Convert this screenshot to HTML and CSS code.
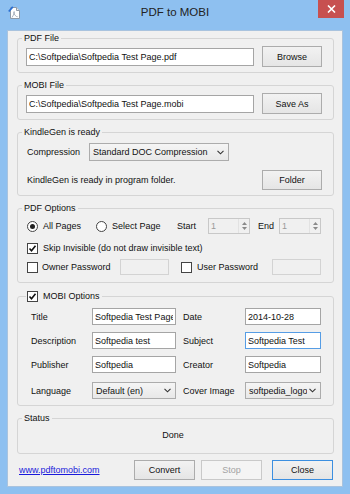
FILE: index.html
```html
<!DOCTYPE html>
<html lang="en">

<head>
    <meta charset="UTF-8">
    <meta name="viewport" content="width=device-width, initial-scale=1.0">
    <title>PDF to MOBI</title>
    <link rel="stylesheet" href="styles.css">
</head>

<body>
    <div class="window">
        <!-- Title bar -->
        <div class="titlebar">
            <svg class="app-icon" width="13" height="14" viewBox="0 0 13 14">
                <path d="M2.5 1.5h6l3 3v8h-9z" fill="#fff" stroke="#8e9aa8"/>
                <path d="M8.5 1.5v3h3" fill="#e4e8ec" stroke="#8e9aa8"/>
                <path d="M0.8 5.5L4.8 0.8" stroke="#2b6fd3" stroke-width="1.8"/>
                <path d="M4 11.5c1.6-2.4 2.8-5.2 2.2-5.8s-0.9 1.8 1.1 3.8 2.4 1 2.4 1" fill="none" stroke="#9aa6b4" stroke-width="0.9"/>
            </svg>
            <div class="title">PDF to MOBI</div>
            <div class="close-btn">
                <svg width="9" height="8" viewBox="0 0 9 8"><path d="M1 0.5l7 7M8 0.5l-7 7" stroke="#fff" stroke-width="1.6"/></svg>
            </div>
        </div>

        <div class="client">
            <!-- PDF File -->
            <fieldset class="group">
                <legend>PDF File</legend>
                <div class="file-row">
                    <input class="textbox path" type="text" value="C:\Softpedia\Softpedia Test Page.pdf">
                    <button class="btn">Browse</button>
                </div>
            </fieldset>

            <!-- MOBI File -->
            <fieldset class="group">
                <legend>MOBI File</legend>
                <div class="file-row">
                    <input class="textbox path" type="text" value="C:\Softpedia\Softpedia Test Page.mobi">
                    <button class="btn">Save As</button>
                </div>
            </fieldset>

            <!-- KindleGen -->
            <fieldset class="group">
                <legend>KindleGen is ready</legend>
                <div class="kg-row">
                    <span class="kg-label">Compression</span>
                    <div class="combo compression">
                        <span>Standard DOC Compression</span>
                        <svg class="chevron" width="7" height="5" viewBox="0 0 7 5"><path d="M0.5 0.8l3 3 3-3" fill="none" stroke="#333" stroke-width="1.1"/></svg>
                    </div>
                </div>
                <div class="kg-status">
                    <span>KindleGen is ready in program folder.</span>
                    <button class="btn">Folder</button>
                </div>
            </fieldset>

            <!-- PDF Options -->
            <fieldset class="group">
                <legend>PDF Options</legend>
                <div class="opt-row pages">
                    <span class="choice all"><span class="radio on"></span>All Pages</span>
                    <span class="choice pick"><span class="radio"></span>Select Page</span>
                    <span class="spin-label start">Start</span>
                    <div class="spin">
                        <span class="spin-value">1</span>
                        <span class="spin-arrows">
                            <svg width="5" height="3" viewBox="0 0 5 3"><path d="M0 3h5L2.5 0z" fill="#8a8a8a"/></svg>
                            <svg width="5" height="3" viewBox="0 0 5 3"><path d="M0 0h5L2.5 3z" fill="#8a8a8a"/></svg>
                        </span>
                    </div>
                    <span class="spin-label end">End</span>
                    <div class="spin">
                        <span class="spin-value">1</span>
                        <span class="spin-arrows">
                            <svg width="5" height="3" viewBox="0 0 5 3"><path d="M0 3h5L2.5 0z" fill="#8a8a8a"/></svg>
                            <svg width="5" height="3" viewBox="0 0 5 3"><path d="M0 0h5L2.5 3z" fill="#8a8a8a"/></svg>
                        </span>
                    </div>
                </div>
                <div class="opt-row skip">
                    <span class="choice">
                        <span class="check"><svg width="9" height="9" viewBox="0 0 9 9"><path d="M1.5 4.5l2 2.2 4-5" fill="none" stroke="#111" stroke-width="1.6"/></svg></span>
                        Skip Invisible (do not draw invisible text)
                    </span>
                </div>
                <div class="opt-row passwords">
                    <span class="choice owner"><span class="check"></span>Owner Password</span>
                    <input class="textbox pass" type="text" disabled>
                    <span class="choice user"><span class="check"></span>User Password</span>
                    <input class="textbox pass" type="text" disabled>
                </div>
            </fieldset>

            <!-- MOBI Options -->
            <fieldset class="group mobi">
                <legend>
                    <span class="choice">
                        <span class="check"><svg width="9" height="9" viewBox="0 0 9 9"><path d="M1.5 4.5l2 2.2 4-5" fill="none" stroke="#111" stroke-width="1.6"/></svg></span>
                        MOBI Options
                    </span>
                </legend>
                <div class="meta-grid">
                    <span class="meta-label">Title</span>
                    <input class="textbox" type="text" value="Softpedia Test Page">
                    <span class="meta-label right">Date</span>
                    <input class="textbox" type="text" value="2014-10-28">

                    <span class="meta-label">Description</span>
                    <input class="textbox" type="text" value="Softpedia test">
                    <span class="meta-label right">Subject</span>
                    <input class="textbox focused" type="text" value="Softpedia Test">

                    <span class="meta-label">Publisher</span>
                    <input class="textbox" type="text" value="Softpedia">
                    <span class="meta-label right">Creator</span>
                    <input class="textbox" type="text" value="Softpedia">

                    <span class="meta-label">Language</span>
                    <div class="combo">
                        <span>Default (en)</span>
                        <svg class="chevron" width="7" height="5" viewBox="0 0 7 5"><path d="M0.5 0.8l3 3 3-3" fill="none" stroke="#333" stroke-width="1.1"/></svg>
                    </div>
                    <span class="meta-label right">Cover Image</span>
                    <div class="combo">
                        <span>softpedia_logo</span>
                        <svg class="chevron" width="7" height="5" viewBox="0 0 7 5"><path d="M0.5 0.8l3 3 3-3" fill="none" stroke="#333" stroke-width="1.1"/></svg>
                    </div>
                </div>
            </fieldset>

            <!-- Status -->
            <fieldset class="group status">
                <legend>Status</legend>
                <div class="status-text">Done</div>
            </fieldset>

            <!-- Bottom buttons -->
            <div class="bottom-bar">
                <a class="link" href="#">www.pdftomobi.com</a>
                <button class="btn">Convert</button>
                <button class="btn stop" disabled>Stop</button>
                <button class="btn close">Close</button>
            </div>
        </div>
    </div>
</body>

</html>
```

FILE: styles.css
```css
/* Reset */
* {
    box-sizing: border-box;
    margin: 0;
    padding: 0;
}

body {
    font-family: "Liberation Sans", Arial, sans-serif;
    font-size: 9px;
    color: #111;
    background-color: #8ec0f0;
    overflow: hidden;
}

/* Window frame */
.window {
    width: 350px;
    height: 494px;
    background-color: #8ec0f0;
    display: flex;
    flex-direction: column;
}

.titlebar {
    height: 30px;
    flex-shrink: 0;
    display: grid;
    grid-template-columns: 1fr auto 1fr;
}

.app-icon {
    display: block;
    margin: 6px 0 0 8px;
}

.title {
    font-size: 11.5px;
    color: #222;
    line-height: 25px;
}

.close-btn {
    justify-self: end;
    width: 26px;
    height: 18px;
    margin-right: 6px;
    background-color: #c75050;
    display: flex;
    align-items: center;
    justify-content: center;
}

.client {
    flex: 1;
    margin: 0 7px 7px 7px;
    border: 1px solid #a9c3de;
    background-color: #f0f0f0;
    padding: 0 8px 0 9px;
    display: flex;
    flex-direction: column;
}

/* Group boxes */
.group {
    border: 1px solid #d5d5d5;
    border-radius: 3px;
    min-width: 0;
    padding: 0;
}

.group + .group {
    margin-top: 5px;
}

.group legend {
    margin-left: 4px;
    padding: 0 2px;
    line-height: 14px;
    font-size: 9px;
}

/* Common controls */
.textbox {
    font: inherit;
    color: #111;
    height: 18px;
    border: 1px solid #a5a5a5;
    background-color: #fff;
    padding: 0 2px;
    outline: none;
    min-width: 0;
}

.textbox.focused {
    border-color: #569de5;
}

.btn {
    font: inherit;
    color: #111;
    width: 60px;
    height: 21px;
    border: 1px solid #acacac;
    background: linear-gradient(#f2f2f2, #e5e5e5);
}

.combo {
    display: flex;
    align-items: center;
    height: 17px;
    border: 1px solid #acacac;
    background: linear-gradient(#f5f5f5, #e8e8e8);
    padding: 0 4px 0 3px;
    min-width: 0;
}

.combo span {
    flex: 1;
    overflow: hidden;
    white-space: nowrap;
}

.chevron {
    flex-shrink: 0;
    margin-left: 2px;
}

.check {
    width: 11px;
    height: 11px;
    border: 1px solid #444;
    background-color: #fff;
    display: flex;
    align-items: center;
    justify-content: center;
    flex-shrink: 0;
}

.radio {
    width: 11px;
    height: 11px;
    border: 1px solid #444;
    border-radius: 50%;
    background-color: #fff;
    display: flex;
    align-items: center;
    justify-content: center;
    flex-shrink: 0;
}

.radio.on::after {
    content: "";
    width: 5px;
    height: 5px;
    border-radius: 50%;
    background-color: #222;
}

.choice {
    display: flex;
    align-items: center;
    gap: 5px;
    white-space: nowrap;
}

/* File rows */
.file-row {
    display: flex;
    align-items: center;
    gap: 8px;
    padding: 1px 0 5px 8px;
}

.path {
    width: 228px;
}

/* KindleGen */
.kg-row {
    display: flex;
    align-items: center;
    padding: 4px 0 0 9px;
}

.kg-label {
    width: 62px;
}

.compression {
    width: 140px;
    height: 18px;
}

.kg-status {
    display: flex;
    align-items: center;
    justify-content: space-between;
    padding: 9px 11px 5px 9px;
}

.kg-status .btn {
    height: 20px;
}

/* PDF options */
.opt-row {
    display: flex;
    align-items: center;
    height: 18px;
    padding-left: 9px;
}

.pages {
    margin-top: 2px;
}

.skip {
    margin-top: 4px;
}

.passwords {
    margin-top: 1px;
    margin-bottom: 6px;
}

.choice.all {
    width: 69px;
}

.choice.pick {
    width: 81px;
}

.spin-label.start {
    width: 31px;
}

.spin-label.end {
    margin-left: 8px;
    width: 21px;
}

.spin {
    width: 42px;
    height: 16px;
    display: flex;
    border: 1px solid #c8c8c8;
    background-color: #f0f0f0;
    color: #9a9a9a;
}

.spin-value {
    flex: 1;
    padding-left: 2px;
    line-height: 14px;
}

.spin-arrows {
    width: 11px;
    display: flex;
    flex-direction: column;
    justify-content: center;
    align-items: center;
    gap: 2px;
    border-left: 1px solid #e2e2e2;
}

.choice.owner {
    width: 93px;
    gap: 4px;
}

.choice.user {
    width: 91px;
    margin-left: 12px;
}

.pass {
    width: 49px;
    height: 16px;
    border-color: #d3d3d3;
    background-color: #f0f0f0;
}

/* MOBI options */
.group.mobi {
    margin-top: 6px;
}

.mobi legend {
    margin-left: 8px;
    padding: 0 2px 0 1px;
}

.meta-grid {
    display: grid;
    grid-template-columns: 61px 84px 69px 76px;
    grid-template-rows: 17px 17px 17px 21px;
    row-gap: 7px;
    align-items: center;
    padding: 5px 0 4px 13px;
}

.meta-grid .textbox,
.meta-grid .combo {
    height: 17px;
}

.meta-label.right {
    padding-left: 7px;
}

/* Status */
.status-text {
    text-align: center;
    line-height: 14px;
    padding: 3px 5px 11px 0;
}

/* Bottom bar */
.bottom-bar {
    display: flex;
    align-items: center;
    margin-top: 6px;
    padding-left: 2px;
}

.link {
    color: #1a1adb;
    text-decoration: underline;
    margin-right: auto;
}

.bottom-bar .btn {
    width: 61px;
    height: 20px;
}

.btn.stop {
    margin-left: 6px;
    color: #a3a3a3;
    border-color: #c9c9c9;
    background: #f4f4f4;
}

.btn.close {
    margin-left: 10px;
    margin-right: 1px;
    border-color: #3c8fe0;
}
```
